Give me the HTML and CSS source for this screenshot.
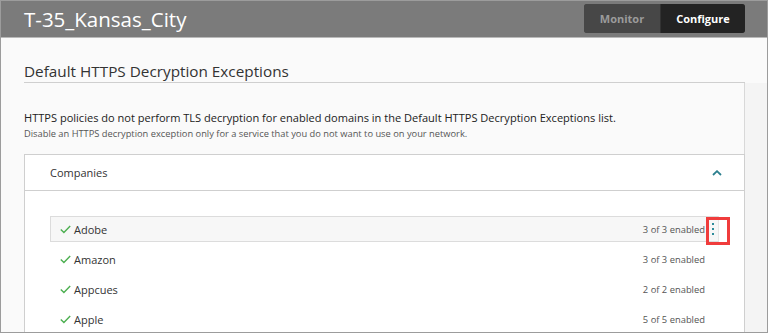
FILE: index.html
```html
<!DOCTYPE html>
<html lang="en">
<head>
  <meta charset="UTF-8" />
  <title>Default HTTPS Decryption Exceptions</title>
  <link rel="stylesheet" href="styles.css">
</head>
<body>
  <div class="frame">
    <!-- Top bar -->
    <header class="topbar">
      <h1 class="device-name">T-35_Kansas_City</h1>
      <nav class="mode-switch">
        <span class="mode">Monitor</span>
        <span class="mode active">Configure</span>
      </nav>
    </header>

    <!-- Page heading -->
    <h2 class="page-title">Default HTTPS Decryption Exceptions</h2>

    <div class="main">
      <div class="pane">
        <p class="lead">HTTPS policies do not perform TLS decryption for enabled domains in the Default HTTPS Decryption Exceptions list.</p>
        <p class="note">Disable an HTTPS decryption exception only for a service that you do not want to use on your network.</p>

        <!-- Companies panel -->
        <section class="card">
          <div class="card-head">
            <span>Companies</span>
            <svg class="chevron" width="10" height="6" viewBox="0 0 10 6">
              <path d="M1 5 L5 1.2 L9 5" fill="none" stroke="#2b7f8e" stroke-width="1.8"/>
            </svg>
          </div>
          <div class="card-body">
            <div class="row hover">
              <svg class="check" width="11" height="9" viewBox="0 0 11 9"><path d="M0.8 4.6 L3.9 7.6 L10.2 1" fill="none" stroke="#4caf50" stroke-width="1.4"/></svg>
              <span class="name">Adobe</span>
              <span class="count">3 of 3 enabled</span>
              <span class="kebab"><i></i><i></i><i></i></span>
              <span class="callout"></span>
            </div>
            <div class="row">
              <svg class="check" width="11" height="9" viewBox="0 0 11 9"><path d="M0.8 4.6 L3.9 7.6 L10.2 1" fill="none" stroke="#4caf50" stroke-width="1.4"/></svg>
              <span class="name">Amazon</span>
              <span class="count">3 of 3 enabled</span>
              <span class="kebab"></span>
            </div>
            <div class="row">
              <svg class="check" width="11" height="9" viewBox="0 0 11 9"><path d="M0.8 4.6 L3.9 7.6 L10.2 1" fill="none" stroke="#4caf50" stroke-width="1.4"/></svg>
              <span class="name">Appcues</span>
              <span class="count">2 of 2 enabled</span>
              <span class="kebab"></span>
            </div>
            <div class="row">
              <svg class="check" width="11" height="9" viewBox="0 0 11 9"><path d="M0.8 4.6 L3.9 7.6 L10.2 1" fill="none" stroke="#4caf50" stroke-width="1.4"/></svg>
              <span class="name">Apple</span>
              <span class="count">5 of 5 enabled</span>
              <span class="kebab"></span>
            </div>
          </div>
        </section>
      </div>
      <div class="side"></div>
    </div>
  </div>
</body>
</html>
```

FILE: styles.css
```css
/* Base */
html, body {
  margin: 0;
  padding: 0;
}

body {
  font-family: "Open Sans", "Liberation Sans", sans-serif;
  color: #333;
  background: #fff;
}

.frame {
  width: 768px;
  height: 333px;
  box-sizing: border-box;
  border: 1px solid #9c9c9c;
  background: #fafafa;
  display: flex;
  flex-direction: column;
  overflow: hidden;
}

/* Top bar */
.topbar {
  flex: none;
  height: 33px;
  background: #7b7b7b;
  border-bottom: 1px solid #b9b9b9;
  display: flex;
  align-items: flex-start;
  justify-content: space-between;
  padding: 3px 22px 0 23px;
}

.device-name {
  margin: 0;
  font-size: 20.5px;
  font-weight: 400;
  line-height: 30px;
  color: #fff;
}

.mode-switch {
  display: flex;
  height: 29px;
  border-radius: 3px;
  overflow: hidden;
  background: #474747;
}

.mode {
  display: flex;
  align-items: center;
  justify-content: center;
  width: 76px;
  font-size: 11px;
  font-weight: 700;
  color: #9b9b9b;
  background: #474747;
}

.mode.active {
  width: 84px;
  color: #fff;
  background: #232323;
  border-left: 1px solid #333;
}

/* Heading */
.page-title {
  margin: 0 22px 0 23px;
  padding: 23px 0 1px;
  font-size: 15.3px;
  font-weight: 400;
  line-height: 20px;
  color: #333;
  border-bottom: 1px solid #cfcfcf;
}

/* Main area */
.main {
  flex: 1;
  display: flex;
  min-height: 0;
}

.pane {
  flex: 1;
  padding-left: 23px;
  border-right: 1px solid #d8d8d8;
}

.side {
  width: 22px;
  background: #f4f4f4;
}

.lead {
  margin: 27px 0 0;
  font-size: 11.05px;
  line-height: 16px;
  color: #222;
}

.note {
  margin: 1px 0 0;
  font-size: 9.3px;
  line-height: 14px;
  color: #555;
}

/* Panel */
.card {
  margin: 13px -1px 0 0;
  background: #fff;
  border: 1px solid #cfcfcf;
  border-bottom: none;
}

.card-head {
  height: 35px;
  display: flex;
  align-items: center;
  justify-content: space-between;
  padding: 0 22px 0 25px;
  font-size: 11px;
  color: #333;
  border-bottom: 1px solid #cfcfcf;
}

.card-body {
  padding: 25px 25px 0;
}

.row {
  position: relative;
  height: 26px;
  box-sizing: border-box;
  margin-bottom: 4px;
  display: flex;
  align-items: center;
  padding-left: 9px;
  border: 1px solid transparent;
  font-size: 11px;
}

.row.hover {
  background: #f7f7f7;
  border-color: #dcdcdc;
  border-right-color: #e6e6e6;
}

.check {
  flex: none;
  margin-right: 3px;
}

.name {
  flex: 1;
  color: #333;
}

.count {
  font-size: 9.4px;
  color: #555;
  margin-right: 2px;
}

.kebab {
  width: 11px;
  height: 12px;
  display: flex;
  flex-direction: column;
  align-items: center;
  justify-content: space-between;
}

.kebab i {
  width: 2px;
  height: 2px;
  background: #2e8c9b;
}

/* Red callout box over the menu */
.callout {
  position: absolute;
  top: 0;
  right: -12px;
  width: 24px;
  height: 28px;
  box-sizing: border-box;
  border: 3px solid #f03c3c;
}
```
